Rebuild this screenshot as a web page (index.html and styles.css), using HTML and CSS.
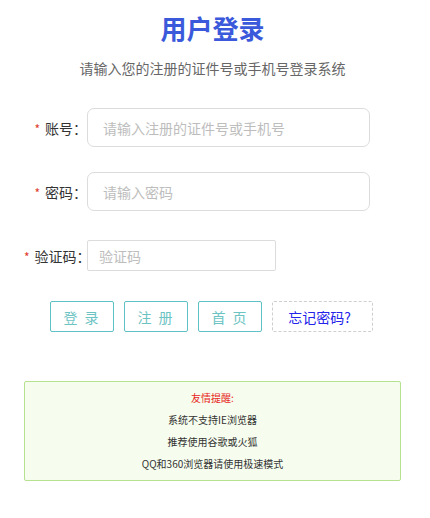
FILE: index.html
```html
<!DOCTYPE html>
<html lang="zh-CN">
<head>
    <meta charset="UTF-8">
    <meta name="viewport" content="width=device-width, initial-scale=1.0">
    <title>用户登录</title>
    <link rel="stylesheet" href="styles.css">
</head>
<body>
    <div class="container">
        <h1 class="title">用户登录</h1>
        <p class="subtitle">请输入您的注册的证件号或手机号登录系统</p>

        <form class="login-form">
            <div class="form-row">
                <label class="form-label"><span class="required">*</span>账号：</label>
                <input class="form-input" type="text" placeholder="请输入注册的证件号或手机号">
            </div>
            <div class="form-row">
                <label class="form-label"><span class="required">*</span>密码：</label>
                <input class="form-input" type="password" placeholder="请输入密码">
            </div>
            <div class="form-row">
                <label class="form-label"><span class="required">*</span>验证码：</label>
                <input class="form-input code-input" type="text" placeholder="验证码">
            </div>
            <div class="actions">
                <button type="button" class="btn">登 录</button>
                <button type="button" class="btn">注 册</button>
                <button type="button" class="btn">首 页</button>
                <button type="button" class="btn btn-forget">忘记密码?</button>
            </div>
        </form>

        <div class="notice">
            <p class="notice-title">友情提醒:</p>
            <p>系统不支持IE浏览器</p>
            <p>推荐使用谷歌或火狐</p>
            <p>QQ和360浏览器请使用极速模式</p>
        </div>
    </div>
</body>
</html>
```

FILE: styles.css
```css
body {
    margin: 0;
    padding: 0;
    background-color: #fff;
    font-family: "Noto Sans CJK SC", "Noto Sans", sans-serif;
    color: #333;
}
.container {
    width: 377px;
    margin-left: 24px;
}
.title {
    margin: 10px 0 0;
    font-size: 26px;
    line-height: 36px;
    font-weight: bold;
    color: #3b59db;
    text-align: center;
}
.subtitle {
    margin: 12px 0 0;
    font-size: 14px;
    line-height: 20px;
    color: #666;
    text-align: center;
}
.login-form {
    margin-top: 30px;
}
.form-row {
    display: flex;
    align-items: center;
    height: 39px;
    margin-bottom: 25px;
}
.form-label {
    width: 63px;
    flex-shrink: 0;
    text-align: right;
    font-size: 14px;
    color: #333;
    white-space: nowrap;
}
.required {
    color: #e0392b;
    font-size: 12px;
    margin-right: 5px;
}
.form-input {
    box-sizing: border-box;
    width: 283px;
    height: 39px;
    padding: 0 15px;
    border: 1px solid #dcdcdc;
    border-radius: 7px;
    font-family: inherit;
    font-size: 14px;
    color: #333;
    outline: none;
}
.form-input::placeholder {
    color: #bdbdbd;
}
.code-input {
    width: 189px;
    height: 31px;
    padding: 0 11px;
    border-radius: 2px;
}
.actions {
    display: flex;
    gap: 10px;
    margin-top: 26px;
    padding-left: 26px;
}
.btn {
    box-sizing: border-box;
    width: 64px;
    height: 31px;
    padding: 0;
    background: #fff;
    border: 1px solid #5fc0c6;
    border-radius: 2px;
    font-family: inherit;
    font-size: 14px;
    letter-spacing: 2px;
    color: #6cc3c3;
    cursor: pointer;
}
.btn-forget {
    width: 101px;
    padding-right: 6px;
    border: 1px dashed #cfcfcf;
    color: #2323ea;
    letter-spacing: 0;
}
.notice {
    box-sizing: border-box;
    margin-top: 49px;
    height: 100px;
    padding: 5px 0 0;
    background: #f6fdee;
    border: 1px solid #b6e28f;
    border-radius: 2px;
    text-align: center;
}
.notice p {
    margin: 0;
    font-size: 10px;
    line-height: 22px;
    color: #333;
}
.notice .notice-title {
    color: #e8261b;
}
```
